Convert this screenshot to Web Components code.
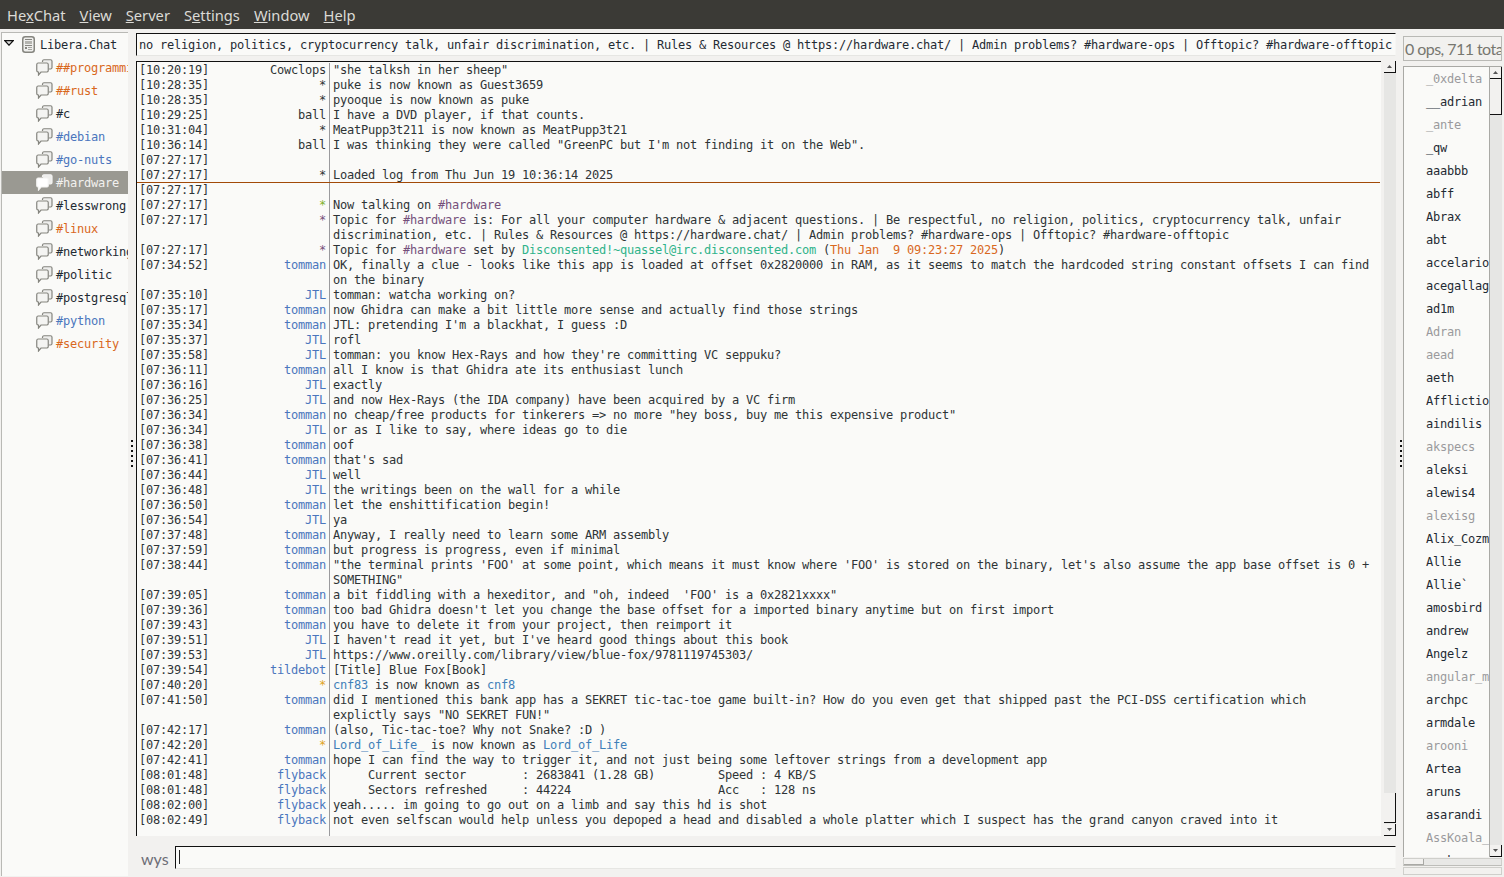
<!DOCTYPE html>
<html><head><meta charset="utf-8"><title>HexChat</title>
<style>
html,body{margin:0;padding:0;height:877px;overflow:hidden;background:#f2f1ef}
</style></head><body>
<hc-app>
  <hc-menubar slot="menu"><u-m>He<u>x</u>Chat</u-m><u-m><u>V</u>iew</u-m><u-m><u>S</u>erver</u-m><u-m>S<u>e</u>ttings</u-m><u-m><u>W</u>indow</u-m><u-m><u>H</u>elp</u-m></hc-menubar>
  <hc-tree slot="tree">
    <hc-server>Libera.Chat</hc-server>
    <hc-chan c="#d9681d">##programming</hc-chan>
    <hc-chan c="#d9681d">##rust</hc-chan>
    <hc-chan c="#1f2a33">#c</hc-chan>
    <hc-chan c="#4a76bd">#debian</hc-chan>
    <hc-chan c="#4a76bd">#go-nuts</hc-chan>
    <hc-chan selected c="#f2f1ef">#hardware</hc-chan>
    <hc-chan c="#1f2a33">#lesswrong</hc-chan>
    <hc-chan c="#d9681d">#linux</hc-chan>
    <hc-chan c="#1f2a33">#networking</hc-chan>
    <hc-chan c="#1f2a33">#politic</hc-chan>
    <hc-chan c="#1f2a33">#postgresql</hc-chan>
    <hc-chan c="#4a76bd">#python</hc-chan>
    <hc-chan c="#d9681d">#security</hc-chan>
  </hc-tree>
  <hc-topic slot="topic">no religion, politics, cryptocurrency talk, unfair discrimination, etc. | Rules &amp; Resources @ https://hardware.chat/ | Admin problems? #hardware-ops | Offtopic? #hardware-offtopic</hc-topic>
  <hc-chat slot="chat">
    <hc-line t="10:20:19" n="Cowclops">"she talksh in her sheep"</hc-line>
    <hc-line t="10:28:35" n="*">puke is now known as Guest3659</hc-line>
    <hc-line t="10:28:35" n="*">pyooque is now known as puke</hc-line>
    <hc-line t="10:29:25" n="ball">I have a DVD player, if that counts.</hc-line>
    <hc-line t="10:31:04" n="*">MeatPupp3t211 is now known as MeatPupp3t21</hc-line>
    <hc-line t="10:36:14" n="ball">I was thinking they were called "GreenPC but I'm not finding it on the Web".</hc-line>
    <hc-line t="07:27:17"></hc-line>
    <hc-line t="07:27:17" n="*">Loaded log from Thu Jun 19 10:36:14 2025</hc-line>
    <hc-line marker t="07:27:17"></hc-line>
    <hc-line t="07:27:17" n="*" c="#7fb32f">Now talking on <hc-c c="#75507b">#hardware</hc-c></hc-line>
    <hc-line t="07:27:17" n="*" c="#75507b">Topic for <hc-c c="#75507b">#hardware</hc-c> is: For all your computer hardware &amp; adjacent questions. | Be respectful, no religion, politics, cryptocurrency talk, unfair</hc-line>
    <hc-line>discrimination, etc. | Rules &amp; Resources @ https://hardware.chat/ | Admin problems? #hardware-ops | Offtopic? #hardware-offtopic</hc-line>
    <hc-line t="07:27:17" n="*" c="#75507b">Topic for <hc-c c="#75507b">#hardware</hc-c> set by <hc-c c="#2fb38a">Disconsented!~quassel@irc.disconsented.com</hc-c> (<hc-c c="#d9681d">Thu Jan  9 09:23:27 2025</hc-c>)</hc-line>
    <hc-line t="07:34:52" n="tomman" c="#4a76bd">OK, finally a clue - looks like this app is loaded at offset 0x2820000 in RAM, as it seems to match the hardcoded string constant offsets I can find</hc-line>
    <hc-line>on the binary</hc-line>
    <hc-line t="07:35:10" n="JTL" c="#4a76bd">tomman: watcha working on?</hc-line>
    <hc-line t="07:35:17" n="tomman" c="#4a76bd">now Ghidra can make a bit little more sense and actually find those strings</hc-line>
    <hc-line t="07:35:34" n="tomman" c="#4a76bd">JTL: pretending I'm a blackhat, I guess :D</hc-line>
    <hc-line t="07:35:37" n="JTL" c="#4a76bd">rofl</hc-line>
    <hc-line t="07:35:58" n="JTL" c="#4a76bd">tomman: you know Hex-Rays and how they're committing VC seppuku?</hc-line>
    <hc-line t="07:36:11" n="tomman" c="#4a76bd">all I know is that Ghidra ate its enthusiast lunch</hc-line>
    <hc-line t="07:36:16" n="JTL" c="#4a76bd">exactly</hc-line>
    <hc-line t="07:36:25" n="JTL" c="#4a76bd">and now Hex-Rays (the IDA company) have been acquired by a VC firm</hc-line>
    <hc-line t="07:36:34" n="tomman" c="#4a76bd">no cheap/free products for tinkerers =&gt; no more "hey boss, buy me this expensive product"</hc-line>
    <hc-line t="07:36:34" n="JTL" c="#4a76bd">or as I like to say, where ideas go to die</hc-line>
    <hc-line t="07:36:38" n="tomman" c="#4a76bd">oof</hc-line>
    <hc-line t="07:36:41" n="tomman" c="#4a76bd">that's sad</hc-line>
    <hc-line t="07:36:44" n="JTL" c="#4a76bd">well</hc-line>
    <hc-line t="07:36:48" n="JTL" c="#4a76bd">the writings been on the wall for a while</hc-line>
    <hc-line t="07:36:50" n="tomman" c="#4a76bd">let the enshittification begin!</hc-line>
    <hc-line t="07:36:54" n="JTL" c="#4a76bd">ya</hc-line>
    <hc-line t="07:37:48" n="tomman" c="#4a76bd">Anyway, I really need to learn some ARM assembly</hc-line>
    <hc-line t="07:37:59" n="tomman" c="#4a76bd">but progress is progress, even if minimal</hc-line>
    <hc-line t="07:38:44" n="tomman" c="#4a76bd">"the terminal prints 'FOO' at some point, which means it must know where 'FOO' is stored on the binary, let's also assume the app base offset is 0 +</hc-line>
    <hc-line>SOMETHING"</hc-line>
    <hc-line t="07:39:05" n="tomman" c="#4a76bd">a bit fiddling with a hexeditor, and "oh, indeed  'FOO' is a 0x2821xxxx"</hc-line>
    <hc-line t="07:39:36" n="tomman" c="#4a76bd">too bad Ghidra doesn't let you change the base offset for a imported binary anytime but on first import</hc-line>
    <hc-line t="07:39:43" n="tomman" c="#4a76bd">you have to delete it from your project, then reimport it</hc-line>
    <hc-line t="07:39:51" n="JTL" c="#4a76bd">I haven't read it yet, but I've heard good things about this book</hc-line>
    <hc-line t="07:39:53" n="JTL" c="#4a76bd">https://www.oreilly.com/library/view/blue-fox/9781119745303/</hc-line>
    <hc-line t="07:39:54" n="tildebot" c="#4a76bd">[Title] Blue Fox[Book]</hc-line>
    <hc-line t="07:40:20" n="*" c="#e0a526"><hc-c c="#3f7fb8">cnf83</hc-c> is now known as <hc-c c="#3f7fb8">cnf8</hc-c></hc-line>
    <hc-line t="07:41:50" n="tomman" c="#4a76bd">did I mentioned this bank app has a SEKRET tic-tac-toe game built-in? How do you even get that shipped past the PCI-DSS certification which</hc-line>
    <hc-line>explictly says "NO SEKRET FUN!"</hc-line>
    <hc-line t="07:42:17" n="tomman" c="#4a76bd">(also, Tic-tac-toe? Why not Snake? :D )</hc-line>
    <hc-line t="07:42:20" n="*" c="#e0a526"><hc-c c="#3f7fb8">Lord_of_Life_</hc-c> is now known as <hc-c c="#3f7fb8">Lord_of_Life</hc-c></hc-line>
    <hc-line t="07:42:41" n="tomman" c="#4a76bd">hope I can find the way to trigger it, and not just being some leftover strings from a development app</hc-line>
    <hc-line t="08:01:48" n="flyback" c="#4a76bd">     Current sector        : 2683841 (1.28 GB)         Speed : 4 KB/S</hc-line>
    <hc-line t="08:01:48" n="flyback" c="#4a76bd">     Sectors refreshed     : 44224                     Acc   : 128 ns</hc-line>
    <hc-line t="08:02:00" n="flyback" c="#4a76bd">yeah..... im going to go out on a limb and say this hd is shot</hc-line>
    <hc-line t="08:02:49" n="flyback" c="#4a76bd">not even selfscan would help unless you depoped a head and disabled a whole platter which I suspect has the grand canyon craved into it</hc-line>
    <hc-line fill></hc-line>
  </hc-chat>
  <hc-scrollbar slot="chatbar" before="720" thumb="30"></hc-scrollbar>
  <hc-input slot="input" nick="wys"></hc-input>
  <hc-count slot="count">0 ops, 711 total</hc-count>
  <hc-users slot="users">
    <hc-user away>_0xdelta</hc-user><hc-user>__adrian</hc-user><hc-user away>_ante</hc-user><hc-user>_qw</hc-user><hc-user>aaabbb</hc-user><hc-user>abff</hc-user><hc-user>Abrax</hc-user><hc-user>abt</hc-user><hc-user>accelario</hc-user><hc-user>acegallag</hc-user><hc-user>ad1m</hc-user><hc-user away>Adran</hc-user><hc-user away>aead</hc-user><hc-user>aeth</hc-user><hc-user>Afflictio</hc-user><hc-user>aindilis</hc-user><hc-user away>akspecs</hc-user><hc-user>aleksi</hc-user><hc-user>alewis4</hc-user><hc-user away>alexisg</hc-user><hc-user>Alix_Cozm</hc-user><hc-user>Allie</hc-user><hc-user>Allie`</hc-user><hc-user>amosbird</hc-user><hc-user>andrew</hc-user><hc-user>Angelz</hc-user><hc-user away>angular_m</hc-user><hc-user>archpc</hc-user><hc-user>armdale</hc-user><hc-user away>arooni</hc-user><hc-user>Artea</hc-user><hc-user>aruns</hc-user><hc-user>asarandi</hc-user><hc-user away>AssKoala_</hc-user><hc-user>asoka</hc-user>
  </hc-users>
  <hc-scrollbar slot="usersbar" before="0" thumb="36"></hc-scrollbar>
</hc-app>
<script>
const MONO='"DejaVu Sans Mono","Liberation Mono",monospace';
const UI='"Noto Sans","Open Sans",sans-serif';
const UI2='Lato,"Noto Sans",sans-serif';
const MONOCSS=`font:12px/15px ${MONO};letter-spacing:-.224px;`;
function def(name,html,init){
  customElements.define(name,class extends HTMLElement{
    constructor(){super();this.attachShadow({mode:'open'}).innerHTML=html;}
    connectedCallback(){init&&init(this,this.shadowRoot);}
  });
}
def('hc-app',`<style>
:host{display:flex;flex-direction:column;width:1504px;height:877px;overflow:hidden;background:#f2f1ef}
.main{flex:1;display:flex;min-height:0}
.left{width:127px;margin:3px 0 1px 1px;display:flex}
.grip{width:8px;position:relative;flex:none}
.grip i{position:absolute;top:411px;width:2px;height:30px;background:repeating-linear-gradient(#111 0 2px,transparent 2px 5px)}
.g1 i{left:3px}.g2{width:7px}.g2 i{left:4px;top:411px}
.center{width:1260px;display:flex;flex-direction:column;padding-top:4px;box-sizing:border-box}
.chatrow{height:775px;margin-top:5px;display:flex;gap:3px}
.right{width:99px;display:flex;flex-direction:column;padding-top:7px;box-sizing:border-box}
.listrow{height:791px;margin-top:5px;display:flex;border:solid #a9a9a5;border-width:1px 0 0 1px;box-sizing:border-box}
.hs{height:8px;margin-top:1px;border:1px solid #cfcfcb;border-bottom-color:#bdbdb9;box-sizing:border-box;display:flex;background:#e8e8e6}
.hs i{width:19px;background:#f2f1ef;border-right:1px solid #a9a9a5;border-bottom:1px solid #a9a9a5}
.st{height:8px;margin-top:1px;border:1px solid #cfcfcb;box-sizing:border-box}
</style>
<slot name="menu"></slot>
<div class="main">
  <div class="left"><slot name="tree"></slot></div>
  <div class="grip g1"><i></i></div>
  <div class="center">
    <slot name="topic"></slot>
    <div class="chatrow"><slot name="chat"></slot><slot name="chatbar"></slot></div>
    <slot name="input"></slot>
  </div>
  <div class="grip g2"><i></i></div>
  <div class="right">
    <slot name="count"></slot>
    <div class="listrow"><slot name="users"></slot><slot name="usersbar"></slot></div>
    <div class="hs"><i></i></div>
    <div class="st"></div>
  </div>
</div>`);
def('hc-menubar',`<style>:host{display:flex;height:29px;flex:none;background:#3b3a36;color:#dcdbd6;font:14.700px/31px ${UI};padding-left:7px;gap:14px;box-sizing:border-box}</style><slot></slot>`);
def('u-m',`<style>:host{display:block}</style><slot></slot>`);
def('hc-tree',`<style>:host{display:block;width:127px;background:#fafaf8;border:solid #b9b9b5;border-width:1px 0 0 1px;box-sizing:border-box;overflow:hidden;${MONOCSS}}</style><slot></slot>`);
def('hc-server',`<style>:host{display:flex;align-items:center;height:23px;color:#1f2a33}
.tri{margin-left:2px;width:10px;flex:none;margin-top:-3px}.srv{margin-left:8px;margin-right:5px;flex:none}.l{padding-top:2px}</style>
<svg class="tri" width="10" height="6" viewBox="0 0 10 6"><path d="M.8.7h8.400L5 5.200z" fill="#dcdcda" stroke="#111" stroke-width="1.200"/></svg>
<svg class="srv" width="13" height="17" viewBox="0 0 13 17"><rect x=".75" y=".75" width="11.500" height="15.500" rx="2.500" fill="#efefed" stroke="#85857f" stroke-width="1.500"/><rect x="3" y="3" width="7" height="1" fill="#85857f"/><rect x="3" y="5" width="7" height="3" fill="#b5b5b0"/><rect x="3" y="9" width="7" height="1" fill="#85857f"/><rect x="3" y="11" width="2" height="2" fill="#85857f"/><rect x="6" y="11" width="4" height="1" fill="#a5a5a0"/><rect x="6" y="13" width="4" height="1" fill="#a5a5a0"/></svg><span class="l"><slot></slot></span>`);
def('hc-chan',`<style>:host{display:flex;align-items:center;height:23px;padding-left:34px;color:var(--c);white-space:nowrap}
:host([selected]){background:#9a9992}
svg{flex:none;margin-right:3px}.l{padding-top:2px}
:host([selected]) path{stroke:#f4f4f2}
:host([selected]) .f{fill:#fff}
</style><svg width="17" height="17" viewBox="0 0 17 17"><path class="b" d="M6.500 3V2A1.500 1.500 0 0 1 8 .75H14.500A1.500 1.500 0 0 1 16 2.250V8.500A1.500 1.500 0 0 1 14.500 10H12.500" fill="#eeeeec" stroke="#85857f" stroke-width="1.200"/><path class="f" d="M2 4H11a1.500 1.500 0 0 1 1.250 1.500v6A1.500 1.500 0 0 1 11 13H5l-2.500 3v-3H2a1.500 1.500 0 0 1-1.250-1.500v-6A1.500 1.500 0 0 1 2 4z" fill="#f4f4f2" stroke="#85857f" stroke-width="1.200"/></svg><span class="l"><slot></slot></span>`,
 (el)=>el.style.setProperty('--c',el.getAttribute('c')));
def('hc-topic',`<style>:host{display:block;height:23px;width:1260px;box-sizing:border-box;background:#fafaf8;border:1px solid #f6f6f4;border-color:#111 #f6f6f4 #e6e6e3 #111;padding:4px 2px 0;color:#1f2a33;white-space:nowrap;overflow:hidden;${MONOCSS}}</style><slot></slot>`);
def('hc-chat',`<style>:host{display:flex;flex-direction:column;width:1245px;height:775px;box-sizing:border-box;background:#fafaf8;border:solid #111;border-width:1px 0 0 1px;padding-top:1px;overflow:hidden;color:#2e3436;white-space:pre;${MONOCSS}}</style><slot></slot>`);
def('hc-line',`<style>:host{display:block;position:relative;flex:none}
:host([fill]){flex:1}
.r{display:flex;height:100%;min-height:15px;padding-left:2px}
.t{width:70px;flex:none;color:#2e3436}
.n{width:117px;flex:none;text-align:right;color:var(--c,#2e3436);padding-right:3px;box-sizing:content-box}
.m{border-left:1px solid #9a9a9d;padding-left:3px;flex:1;min-width:0;overflow:hidden}
.mk{position:absolute;left:0;right:1px;top:-1px;height:1px;background:#a24a08}
</style><div class="r"><span class="t"></span><span class="n"></span><span class="m"><slot></slot></span></div><span class="mk" hidden></span>`,
 (el,s)=>{const t=el.getAttribute('t');if(t)s.querySelector('.t').textContent='['+t+']';
  s.querySelector('.n').textContent=el.getAttribute('n')||'';
  if(el.getAttribute('c'))el.style.setProperty('--c',el.getAttribute('c'));
  if(el.hasAttribute('marker'))s.querySelector('.mk').hidden=false;});
def('hc-c',`<style>:host{display:inline;color:var(--c)}</style><slot></slot>`,(el)=>el.style.setProperty('--c',el.getAttribute('c')));
def('hc-scrollbar',`<style>:host{display:flex;flex-direction:column;width:12px;flex:none;background:#e6e6e4;box-sizing:border-box}
.b{height:12px;flex:none;background:#f2f1ef;border:solid #111;border-width:0 1px 1px 0;box-sizing:border-box;display:flex;align-items:center;justify-content:center}
.s{flex:none}.x{flex:1}
.th{flex:none;background:#f2f1ef;border:solid #111;border-width:0 1px 1px 0;box-sizing:border-box}
</style><div class="b"><svg width="5" height="3"><path d="M2.500 0L5 3H0z" fill="#555"/></svg></div><div class="s"></div><div class="th"></div><div class="x"></div><div class="b"><svg width="5" height="3"><path d="M0 0h5L2.500 3z" fill="#555"/></svg></div>`,
 (el,s)=>{s.querySelector('.s').style.height=el.getAttribute('before')+'px';s.querySelector('.th').style.height=el.getAttribute('thumb')+'px';});
def('hc-input',`<style>:host{display:flex;height:32px;box-sizing:border-box;padding-top:10px}
.nick{width:39px;flex:none;padding-left:5px;box-sizing:border-box;font:16px/26px ${UI2};color:#6d6d76}
.box{flex:1;height:23px;box-sizing:border-box;background:#fafaf8;border:solid #111;border-width:1px 0 0 1px;border-right:1px solid #f6f6f4;border-bottom:1px solid #e6e6e3;padding:3px 0 0 3px}
.caret{display:block;width:1px;height:14px;background:#222}
</style><div class="nick"></div><div class="box"><span class="caret"></span></div>`,
 (el,s)=>{s.querySelector('.nick').textContent=el.getAttribute('nick');});
def('hc-count',`<style>:host{display:block;height:25px;box-sizing:border-box;border:1px solid #b9b9b5;background:#f2f1ef;color:#77776f;font:16px/24px ${UI2};letter-spacing:-.55px;padding-left:1px;white-space:nowrap;overflow:hidden}</style><slot></slot>`);
def('hc-users',`<style>:host{display:block;flex:1;min-width:0;background:#fafaf8;border-right:1px solid #a9a9a5;overflow:hidden;${MONOCSS}}</style><slot></slot>`);
def('hc-user',`<style>:host{display:block;height:23px;box-sizing:border-box;padding-top:1px;line-height:23px;padding-left:22px;color:#1f2a33;white-space:nowrap;overflow:hidden}:host([away]){color:#9a9a9d}</style><slot></slot>`);
</script>
</body></html>
